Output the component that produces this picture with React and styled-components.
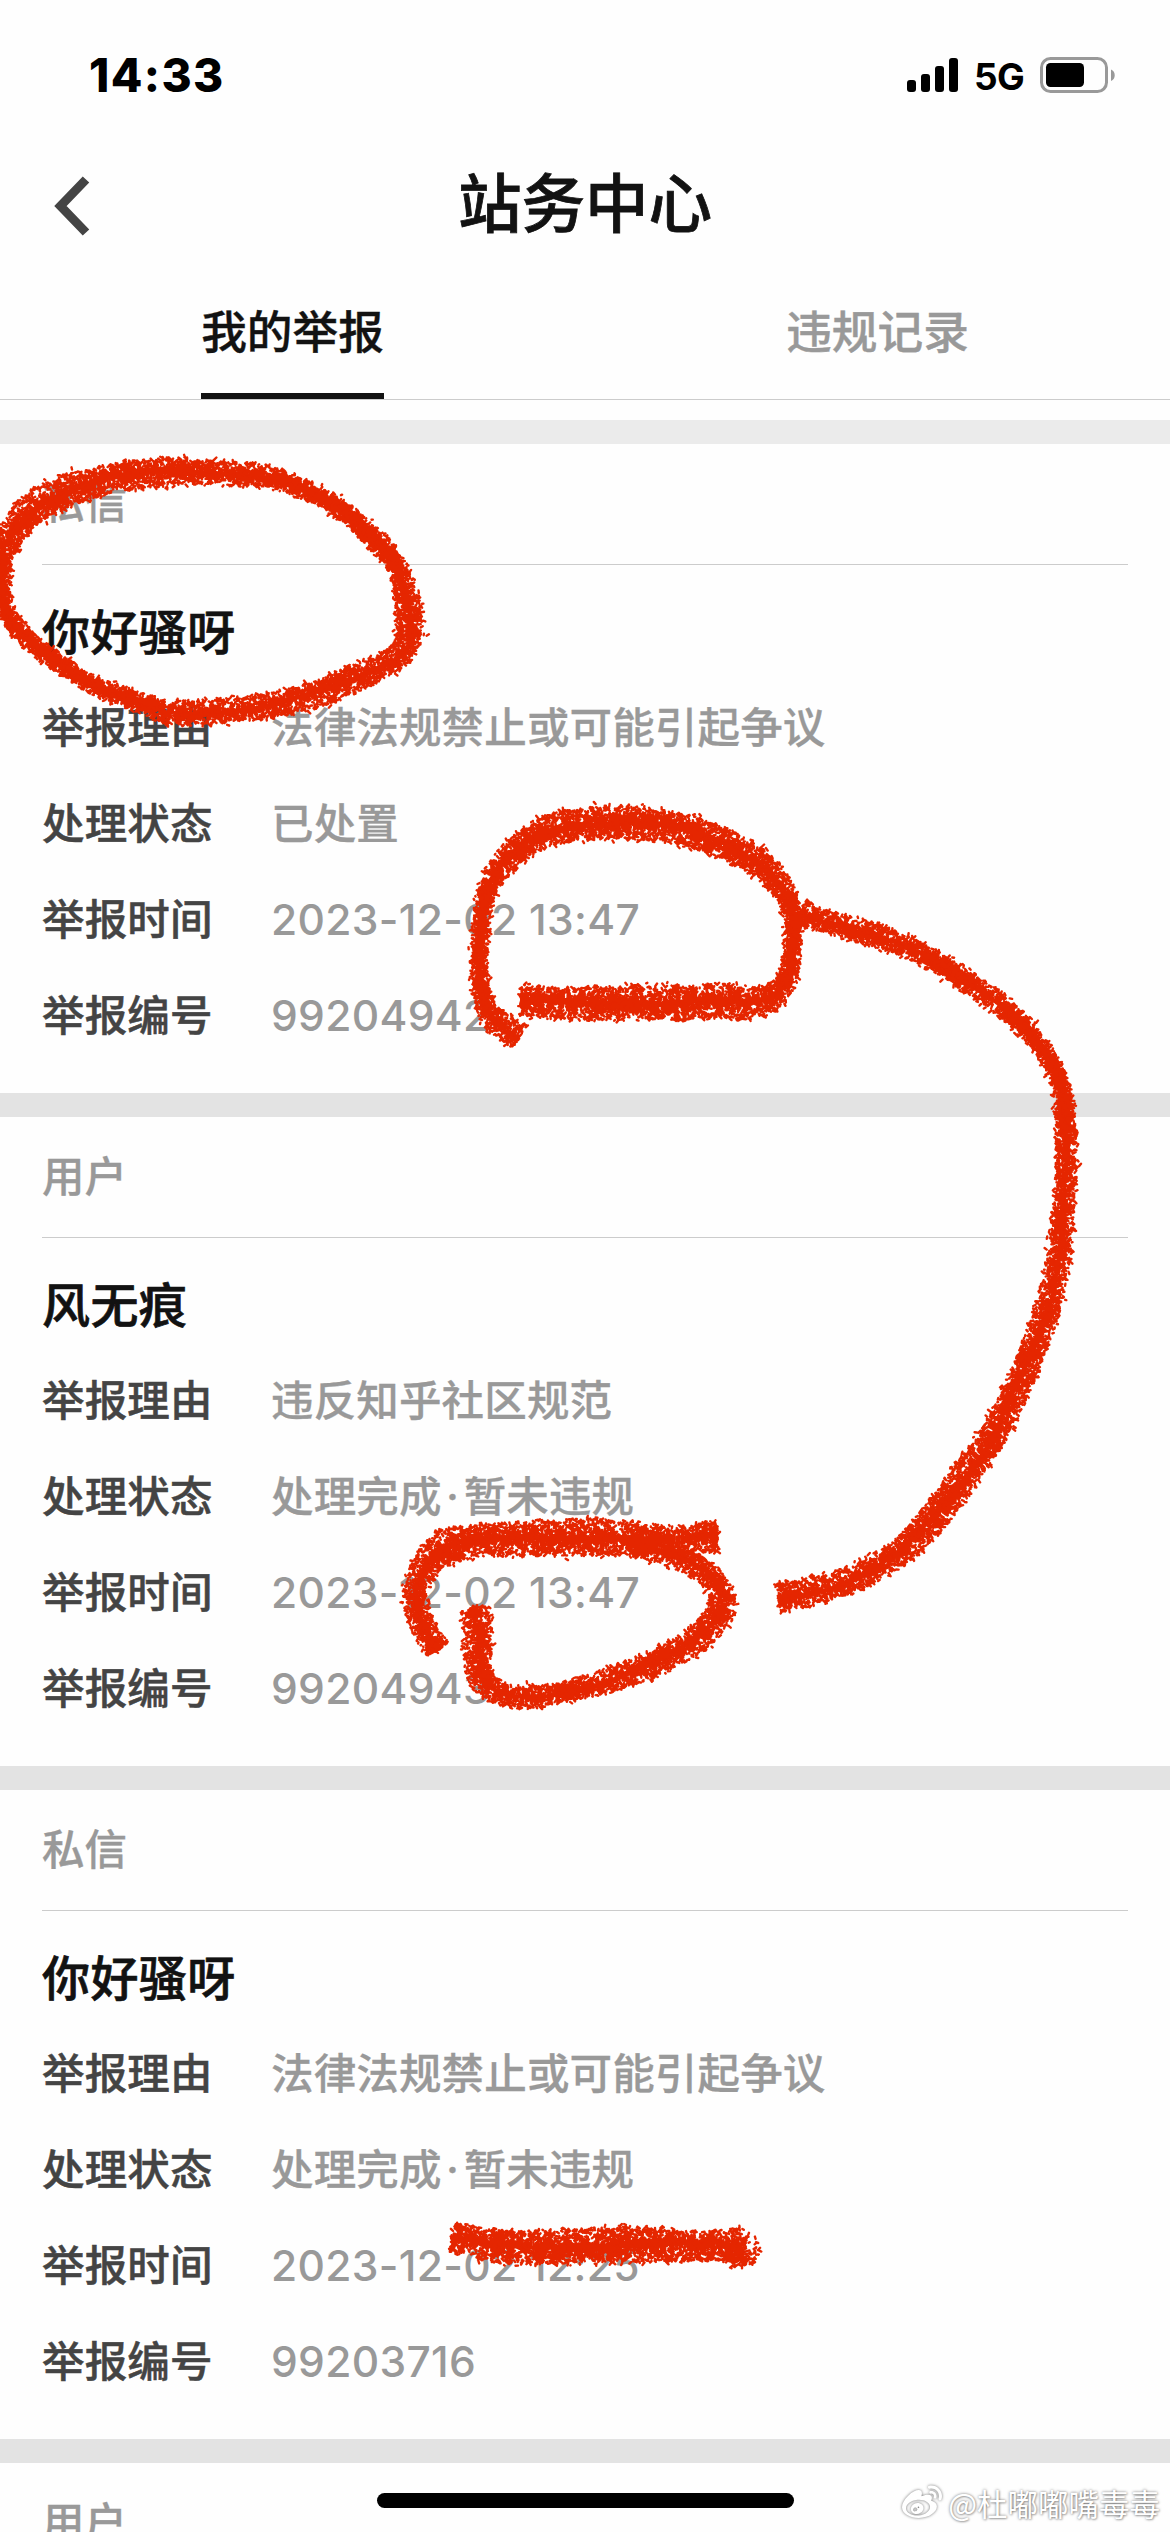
import React, { useMemo } from "react";
import { FaWeibo } from "react-icons/fa";
import styled, { createGlobalStyle } from "styled-components";

const GlobalStyle = createGlobalStyle`
  body {
    margin: 0;
    background: #fff;
    font-family: Inter, "Noto Sans CJK SC", sans-serif;
    font-weight: 500;
  }
  * {
    box-sizing: border-box;
  }
`;

const Screen = styled.div`
  position: relative;
  width: 1170px;
  height: 2532px;
  overflow: hidden;
  background: #fefefe;
`;

const StatusBar = styled.div`
  display: flex;
  align-items: center;
  justify-content: space-between;
  height: 149px;
  padding: 0 54px 0 89px;
  color: #000;
`;

const Clock = styled.span`
  font-size: 46px;
  font-weight: 800;
  letter-spacing: 1.4px;
`;

const StatusIcons = styled.div`
  display: flex;
  align-items: center;
`;

const Network = styled.span`
  width: 82px;
  padding-left: 16px;
  padding-top: 3px;
  font-size: 37px;
  font-weight: 650;
  letter-spacing: -0.6px;
`;

const NavBar = styled.div`
  display: grid;
  grid-template-columns: 120px 1fr 120px;
  align-items: center;
  height: 109px;
`;

const BackButton = styled.button`
  display: flex;
  padding: 5px 0 0 54px;
  border: 0;
  background: none;
`;

const Title = styled.h1`
  margin: 0;
  text-align: center;
  font-size: 63.5px;
  font-weight: 500;
  line-height: 108px;
  color: #121212;
  -webkit-text-stroke: 0.8px #121212;
`;

const Tabs = styled.div`
  display: flex;
  height: 142px;
  border-bottom: 1px solid #ccc;
`;

const Tab = styled.div`
  flex: 1;
  display: flex;
  justify-content: center;

  span {
    height: 141px;
    line-height: 150px;
    font-size: 45.7px;
    color: ${({ $active }) => ($active ? "#121212" : "#999")};
    border-bottom: ${({ $active }) => ($active ? "6px solid #121212" : "0")};
    -webkit-text-stroke: 0.4px ${({ $active }) => ($active ? "#121212" : "#999")};
  }
`;

const Band = styled.div`
  height: 24px;
  margin-top: ${({ $first }) => ($first ? "20px" : "0")};
  background: ${({ $first }) => ($first ? "#ebebeb" : "#e3e3e3")};
`;

const Card = styled.section`
  height: 649px;
  padding: 0 42px;
`;

const CardType = styled.div`
  height: 121px;
  line-height: 120px;
  font-size: 42.5px;
  color: #999;
  border-bottom: 1px solid #ccc;
  -webkit-text-stroke: 0.3px #999;
`;

const CardName = styled.h2`
  height: 114px;
  margin: 0;
  padding-top: 20px;
  line-height: 95px;
  font-size: 48px;
  font-weight: 500;
  letter-spacing: 0.4px;
  color: #121212;
  -webkit-text-stroke: 0.7px #121212;
`;

const Row = styled.div`
  display: grid;
  grid-template-columns: 229px 1fr;
  height: 96px;
  line-height: 98px;
  font-size: 42.5px;
  white-space: nowrap;
`;

const Label = styled.span`
  color: #444;
  letter-spacing: 0.15px;
  -webkit-text-stroke: 0.5px #444;
`;

const Value = styled.span`
  color: #999;
  letter-spacing: ${({ $numeric }) => ($numeric ? "0.32px" : "0.15px")};
  -webkit-text-stroke: ${({ $numeric }) => ($numeric ? "0" : "0.3px #999")};
`;

const Dot = styled.i`
  margin: 0 4.5px;
  font-style: normal;
`;

const HomeIndicator = styled.div`
  position: absolute;
  left: 377px;
  top: 2493px;
  width: 417px;
  height: 15px;
  border-radius: 8px;
  background: #000;
`;

const Watermark = styled.div`
  position: absolute;
  right: 10px;
  bottom: 7px;
  display: flex;
  align-items: center;
  gap: 6px;
  height: 44px;
  font-size: 30.5px;
  font-weight: 400;
  font-family: "Noto Sans CJK SC", sans-serif;
  color: #fff;
  text-shadow: 0 0 3px rgba(0, 0, 0, 0.55), 1px 1px 2px rgba(0, 0, 0, 0.2);

  svg {
    filter: drop-shadow(0 0 1.5px rgba(0, 0, 0, 0.55));
  }
`;

const Ink = styled.svg`
  position: absolute;
  left: 0;
  top: 2px;
  pointer-events: none;
  filter: blur(0.7px);
`;

// every point is [x, y, crayon width]
const strokes = [
  [
    [172, 711, 24], [152, 705, 22], [134, 698, 20], [97, 685, 18], [67, 667, 18], [41, 648, 18], [19, 628, 18],
    [6, 610, 16], [2, 590, 17], [3, 567, 20], [6, 543, 26], [22, 517, 32], [49, 497, 34],
    [86, 483, 32], [127, 474, 30], [168, 470, 28], [209, 470, 26], [252, 473, 24], [285, 480, 21],
    [317, 493, 20], [347, 512, 20], [369, 532, 21], [388, 552, 21], [401, 573, 22], [407, 597, 27],
    [410, 617, 29], [408, 640, 28], [393, 658, 26], [366, 671, 28], [336, 685, 29], [299, 697, 27],
    [261, 705, 26], [220, 709, 25], [175, 711, 25],
  ],
  [
    [519, 1035, 26], [502, 1023, 28], [487, 1007, 22], [480, 980, 18], [479, 953, 18], [481, 927, 18],
    [485, 897, 19], [497, 871, 24], [517, 848, 28], [540, 832, 30], [567, 824, 33], [600, 821, 34],
    [627, 821, 36], [663, 824, 34], [697, 832, 32], [730, 844, 31], [757, 860, 29], [778, 880, 25],
    [790, 903, 20], [793, 930, 18], [791, 960, 19], [784, 982, 22], [768, 998, 30], [740, 1001, 36],
    [703, 999, 34], [677, 1001, 36], [637, 1000, 34], [597, 1002, 34], [563, 1002, 32], [521, 998, 32],
  ],
  [
    [800, 912, 26], [827, 920, 24], [853, 927, 25], [890, 938, 24], [923, 953, 22], [970, 981, 22],
    [1007, 1008, 22], [1033, 1035, 19], [1053, 1064, 19], [1063, 1094, 20], [1066, 1130, 22],
    [1066, 1178, 23], [1063, 1220, 24], [1057, 1263, 24], [1047, 1308, 26], [1032, 1352, 27],
    [1013, 1395, 28], [991, 1436, 29], [963, 1477, 30], [935, 1514, 30], [905, 1546, 28],
    [867, 1570, 27], [830, 1585, 28], [778, 1596, 32],
  ],
  [
    [717, 1534, 34], [667, 1538, 28], [597, 1535, 38], [537, 1537, 36], [488, 1539, 33],
    [453, 1542, 38], [433, 1554, 33], [420, 1573, 26], [414, 1596, 26], [422, 1622, 24], [437, 1648, 26],
  ],
  [
    [475, 1606, 26], [478, 1623, 30], [478, 1650, 28], [480, 1674, 28], [496, 1690, 24],
    [527, 1695, 23], [572, 1688, 22], [622, 1674, 26], [667, 1656, 26], [701, 1633, 28],
    [722, 1606, 30], [716, 1582, 26], [697, 1564, 25], [665, 1549, 27], [632, 1540, 30],
  ],
  [
    [453, 2235, 32], [490, 2243, 34], [536, 2245, 35], [612, 2243, 37], [673, 2243, 35],
    [714, 2244, 32], [740, 2245, 36], [745, 2263, 24],
  ],
];

const spline = (a, b, c, d, t) =>
  0.5 * (2 * b + (c - a) * t + (2 * a - 5 * b + 4 * c - d) * t * t + (3 * b - a - 3 * c + d) * t * t * t);

// walks along the strokes: a solid body that drifts from side to side, grains over the full width
const drawCrayon = () => {
  let seed = 7;
  const rnd = () => {
    seed = (seed * 16807) % 2147483647;
    return seed / 2147483647;
  };
  let body = "";
  let grain = "";
  strokes.forEach((points, index) => {
    let walked = index * 40;
    for (let i = 0; i < points.length - 1; i++) {
      const a = points[Math.max(i - 1, 0)];
      const b = points[i];
      const c = points[i + 1];
      const d = points[Math.min(i + 2, points.length - 1)];
      const at = (t) => [0, 1, 2].map((k) => spline(a[k], b[k], c[k], d[k], t));
      const dist = Math.hypot(c[0] - b[0], c[1] - b[1]);
      for (let s = 0; s < dist; s += 2) {
        walked += 2;
        const [x, y, w] = at(s / dist);
        const [x2, y2] = at(s / dist + 0.02);
        const len = Math.hypot(x2 - x, y2 - y) || 1;
        const nx = -(y2 - y) / len;
        const ny = (x2 - x) / len;
        const fill = w > 22 ? 0.17 : 0.29;
        const drift = (w > 22 ? 0.07 : 0.02) * Math.sin(walked / 31);
        const one = w * (fill + drift + (rnd() - 0.5) * 0.3);
        const two = w * (fill - drift + (rnd() - 0.5) * 0.3);
        body += `M${(x - nx * one).toFixed(1)} ${(y - ny * one).toFixed(1)}L${(x + nx * two).toFixed(1)} ${(y + ny * two).toFixed(1)}`;
        const count = Math.round(w / 2.7);
        for (let n = 0; n < count; n++) {
          const reach = (rnd() - 0.5) * (n ? 0.94 : 1.1);
          const px = x + nx * w * reach + (rnd() - 0.5) * 3;
          const py = y + ny * w * reach + (rnd() - 0.5) * 3;
          grain += `M${px.toFixed(1)} ${py.toFixed(1)}l${((rnd() - 0.5) * 5).toFixed(1)} ${((rnd() - 0.5) * 5).toFixed(1)}`;
        }
      }
    }
  });
  return { body, grain };
};

const Crayon = () => {
  const { body, grain } = useMemo(drawCrayon, []);
  return (
    <Ink width="1170" height="2532" viewBox="0 0 1170 2532" fill="none" stroke="#e52600" strokeLinecap="round">
      <path d={body} strokeWidth="2.4" />
      <path d={grain} strokeWidth="2.4" />
    </Ink>
  );
};

const SignalIcon = () => (
  <svg width="51" height="36" viewBox="0 0 51 36">
    <rect x="0" y="23" width="9" height="12" rx="3" />
    <rect x="14" y="17" width="9" height="18" rx="3" />
    <rect x="28" y="9" width="9" height="26" rx="3" />
    <rect x="42" y="1" width="9" height="34" rx="3" />
  </svg>
);

const BatteryIcon = () => (
  <svg width="76" height="36" viewBox="0 0 76 36">
    <rect x="1.5" y="1.5" width="65" height="33" rx="9" fill="none" stroke="#999" strokeWidth="3" />
    <rect x="6" y="6" width="38" height="24" rx="4.5" />
    <path d="M71 12.5c5 2 5 9.500 0 11.500z" fill="#999" />
  </svg>
);

const BackIcon = () => (
  <svg width="36" height="60" viewBox="0 0 36 60" fill="none" stroke="#444" strokeWidth="9">
    <path d="M32 3.500L6.500 30L32 56.500" />
  </svg>
);

const done = (
  <>
    处理完成<Dot>·</Dot>暂未违规
  </>
);

const reports = [
  {
    type: "私信",
    name: "你好骚呀",
    reason: "法律法规禁止或可能引起争议",
    status: "已处置",
    time: "2023-12-02 13:47",
    code: "99204942",
  },
  {
    type: "用户",
    name: "风无痕",
    reason: "违反知乎社区规范",
    status: done,
    time: "2023-12-02 13:47",
    code: "99204943",
  },
  {
    type: "私信",
    name: "你好骚呀",
    reason: "法律法规禁止或可能引起争议",
    status: done,
    time: "2023-12-02 12:25",
    code: "99203716",
  },
];

const ReportCard = ({ report }) => {
  const { type, name, reason, status, time, code } = report;
  return (
    <Card>
      <CardType>{type}</CardType>
      <CardName>{name}</CardName>
      <Row>
        <Label>举报理由</Label>
        <Value>{reason}</Value>
      </Row>
      <Row>
        <Label>处理状态</Label>
        <Value>{status}</Value>
      </Row>
      <Row>
        <Label>举报时间</Label>
        <Value $numeric>{time}</Value>
      </Row>
      <Row>
        <Label>举报编号</Label>
        <Value $numeric>{code}</Value>
      </Row>
    </Card>
  );
};

const App = () => (
  <>
    <GlobalStyle />
    <Screen>
      <StatusBar>
        <Clock>14:33</Clock>
        <StatusIcons>
          <SignalIcon />
          <Network>5G</Network>
          <BatteryIcon />
        </StatusIcons>
      </StatusBar>
      <NavBar>
        <BackButton>
          <BackIcon />
        </BackButton>
        <Title>站务中心</Title>
      </NavBar>
      <Tabs>
        <Tab $active>
          <span>我的举报</span>
        </Tab>
        <Tab>
          <span>违规记录</span>
        </Tab>
      </Tabs>
      {reports.map((report, i) => (
        <React.Fragment key={report.code}>
          <Band $first={i === 0} />
          <ReportCard report={report} />
        </React.Fragment>
      ))}
      <Band />
      <Card>
        <CardType>用户</CardType>
      </Card>
      <Crayon />
      <HomeIndicator />
      <Watermark>
        <FaWeibo size={40} />
        @杜嘟嘟嘴毒毒
      </Watermark>
    </Screen>
  </>
);

export default App;
